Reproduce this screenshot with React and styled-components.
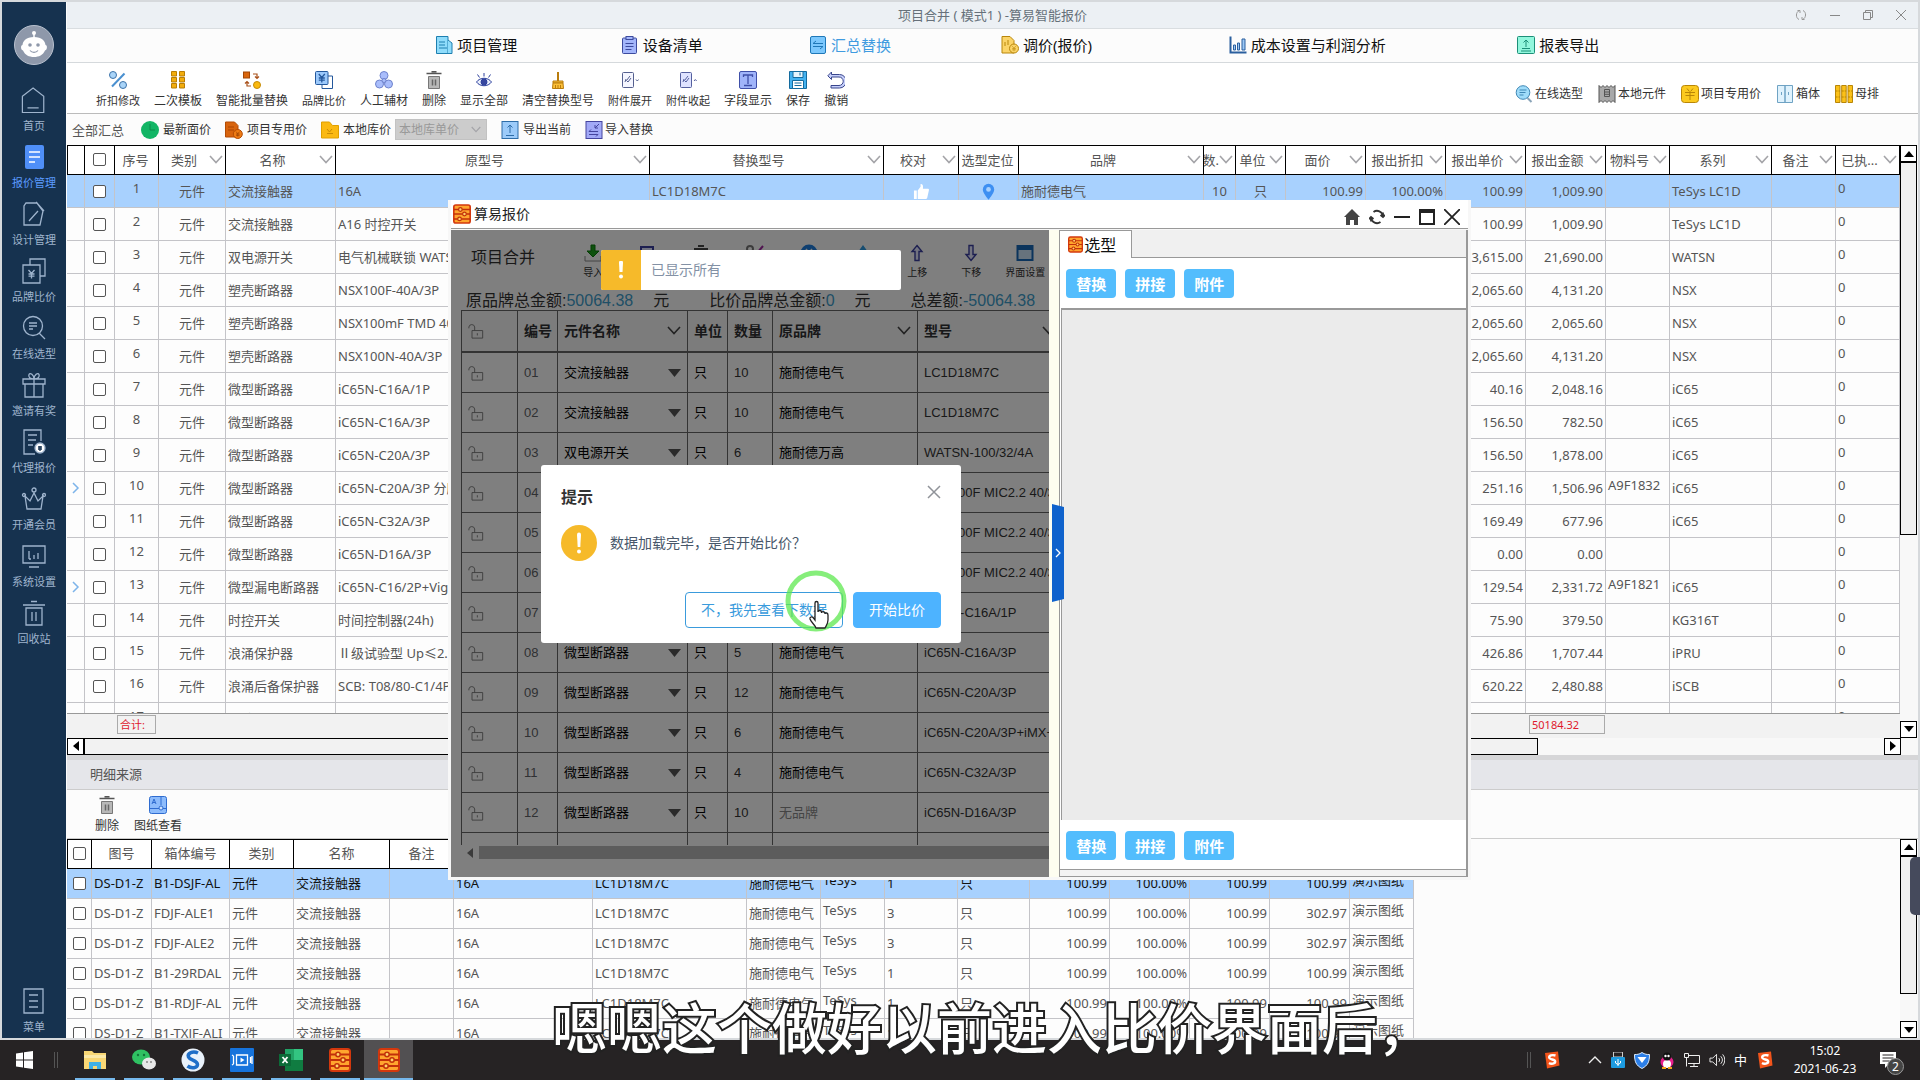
import styled, { createGlobalStyle, css } from "styled-components";

const GlobalStyle = createGlobalStyle`
    * {
        box-sizing: border-box;
    }

    body {
        margin: 0;
        overflow: hidden;
        font-family: "Noto Sans", "Noto Sans CJK SC", sans-serif;
        font-size: 13px;
        line-height: 18px;
        color: #555;
    }

    button, input, select {
        font-family: inherit;
        font-size: inherit;
        line-height: inherit;
        margin: 0;
    }

    button {
        border: none;
        background: none;
        padding: 0;
        cursor: pointer;
        color: inherit;
    }

    svg {
        display: block;
        flex: none;
    }
`;

// every drawing lives on an 18 x 18 board unless a box is given
const Icon = ({ name, size = 18, box = 18 }) => (
    <svg width={size} height={size} viewBox={`0 0 ${box} ${box}`} fill="none" aria-hidden="true">
        {icons[name]}
    </svg>
);

const yen = "M-3 -4 L0 -0.5 L3 -4 M0 -0.5 V4.5 M-3 0 H3 M-3 2.2 H3";

const icons = {
    // navigation tabs
    project: <g stroke="#1d7fb0"><path d="M1.500.5H13v17H1.500z" fill="#8fdcfb"/><path d="M13 4l4 3v10.500H13" fill="#8fdcfb"/><path d="M4 6h6M4 9h6M4 12h8"/></g>,
    list: <g stroke="#3c4a9e"><rect x="1.500" y="2" width="14" height="15.500" rx="1" fill="#a3b6fb"/><rect x="5" y=".5" width="7" height="3" fill="#a3b6fb"/><path d="M4.500 7.500h8M4.500 10.500h8M4.500 13.500h6"/></g>,
    swap: <g stroke="#1f78b8"><rect x="1.500" y=".5" width="15" height="17" rx="1.500" fill="#7cc8fd"/><path d="M4 7.500h10M4 7.500l3-2.500M14 10.500H4M14 10.500l-3 2.500"/></g>,
    price: <g stroke="#b8860b"><path d="M1 .5h8l4 4v12.500H1z" fill="#fbd468"/><path d="M4 6v4M7 4v5"/><circle cx="13" cy="12.500" r="4.500" fill="#fbd468"/><path d={yen} transform="translate(13 12.500) scale(.6)"/></g>,
    chart: <g stroke="#2a5f9e"><path d="M1.500.5v16h16" strokeWidth="2"/><path d="M4.500 9h2v5h-2zM8.500 7h2v7h-2zM13 3h3v11h-3z" fill="#9cc8f5"/></g>,
    report: <g stroke="#1c8f78"><rect x=".5" y=".5" width="17" height="17" rx="1" fill="#92f7dd"/><path d="M9 11V4M6.500 6.500L9 4l2.500 2.500M5 12.500h8M4 15h10"/></g>,

    // main toolbar
    percent: <g stroke="#3d72a8"><circle cx="4" cy="4" r="3.500" fill="#a9d4f8"/><circle cx="14" cy="14" r="3.500" fill="#a9d4f8"/><path d="M15.500 2.500L3 15.500" stroke="#4a90d0" strokeWidth="2"/></g>,
    blocks: <g fill="#f2ac0c" stroke="#b87d05">{[0.5, 6.5, 12.5].map((y) => <path key={y} d={`M2.500 ${y}h5v4.500h-5zM10.500 ${y}h5v4.500h-5z`}/>)}</g>,
    batch: <g><rect x=".5" y="1" width="6" height="6" fill="#d9660d" stroke="#a14605"/><circle cx="14" cy="14" r="3.500" fill="#fab90f" stroke="#c48a07"/><path d="M10 3h4v4M12 5.500l2 2 2-2M8 15H4v-4M2 12.500l2-2 2 2" stroke="#a8501a" strokeWidth="1.200"/></g>,
    compare: <g stroke="#24589c"><path d="M13 5h4.500v12.500H7V13.500"/><rect x=".5" y=".5" width="12.500" height="13" rx="1" fill="#9cc9fb"/><path d={yen} transform="translate(6.800 7)" strokeWidth="1.300"/></g>,
    balls: <g fill="#a9bdfb" stroke="#6f83cc"><circle cx="9" cy="4.500" r="4"/><circle cx="4.500" cy="13" r="4"/><circle cx="13.500" cy="13" r="4"/><circle cx="9" cy="9.500" r="2"/></g>,
    trash: <g><path d="M3.500 5.500h11v12h-11z" fill="#b8b8b8" stroke="#777"/><path d="M1.500 2.500h15M6.500.800h5" stroke="#555" strokeWidth="1.600"/><path d="M7.500 8.500v6M10.500 8.500v6" stroke="#666" strokeWidth="1.500"/></g>,
    eye: <g stroke="#2c3f9c"><path d="M1.500 11C5 6 13 6 16.500 11 13 16 5 16 1.500 11z" fill="#e8eefc"/><circle cx="9" cy="11" r="3" fill="#37479f"/><path d="M9 5.500V2M4.500 6.500l-2-3M13.500 6.500l2-3"/></g>,
    broom: <g stroke="#b97c0d"><path d="M9 1v9" strokeWidth="2"/><path d="M4 10h10v2H4z" fill="#fcc13a"/><path d="M4 12l-.5 5.500h11L14 12z" fill="#fcc13a"/><path d="M6.500 14v3M9 14v3M11.500 14v3"/></g>,
    clipDown: <g stroke="#55608f"><rect x="1.500" y="1.500" width="11" height="15" rx="1" fill="#f5f6ff"/><path d="M9 5l-3.500 4.500 1.500 1.500L10 7M5 8l-1 3"/><path d="M15 8.500l1.300 1.500 1.300-1.500"/></g>,
    clipUp: <g stroke="#55609f"><rect x="1.500" y="1.500" width="11" height="15" rx="1" fill="#dfe3ff"/><path d="M9 5l-3.500 4.500 1.500 1.500L10 7M5 8l-1 3"/><path d="M15 10l1.300-1.500L17.600 10"/></g>,
    field: <g stroke="#3f4fa8"><rect x=".5" y=".5" width="17" height="17" rx="1.500" fill="#a0b4fa"/><path d="M4.500 6V4h9v2M9 4v9M5 14.500h8" strokeWidth="1.300"/></g>,
    save: <g stroke="#146b9e"><path d="M.5.500h17v17H.500z" fill="#44b2f0"/><path d="M4 .5h10v6H4z" fill="#e6f5fd"/><path d="M11 1.500v3M3.500 9.500h11v8h-11z" fill="#fff"/><path d="M5.500 12h7M5.500 14.500h7"/></g>,
    undo: <g stroke="#39468c"><path d="M4.500 1L.800 4.800l3.700 3.700V6H12a3.500 3.500 0 010 8.500H4V17h8.500a5.800 5.800 0 000-13.500h-8z" fill="#c6cffa"/></g>,

    // right hand shortcuts
    search: <g><path d="M12.500 13l4 4" stroke="#8aa4b8" strokeWidth="2"/><circle cx="8" cy="7.500" r="6.800" fill="#9fdcfa" stroke="#3f87b5"/><path d="M4.500 5h7M4.500 7.500h6M4.500 10h4" stroke="#3f87b5"/></g>,
    chip: <g stroke="#555"><path d="M1 .5l2 2 2-2 2 2 2-2 2 2 2-2 2 2 2-2v17l-2-2-2 2-2-2-2 2-2-2-2 2-2-2-2 2z" fill="#a9a9a9"/><path d="M6.500 4.500h5v7h-5zM6.500 7h5M6.500 9.300h5"/></g>,
    coin: <g stroke="#b98607"><rect x=".5" y=".5" width="17" height="17" rx="3" fill="#fcca1f"/><path d="M6 3.500l2 2.500M12 3.500L10 6M4 7.500h10M4.500 10.500h9M9 6v9"/></g>,
    cabinet: <g stroke="#6fa3c4"><path d="M1.500.5h7.500v17H1.500zM9 .5h7.500v17H9z" fill="#dff2fd"/><path d="M5.500 7v3M12.500 7v3"/></g>,
    bars: <g fill="#fbc119" stroke="#b98607"><path d="M.5.500h4.500v17H.500zM6.700.5h4.500v17H6.700zM13 .5h4.500v17H13z"/><path d="M.5 6h4.500M6.700 6h4.500M13 6h4.500M.5 12h4.500M6.700 12h4.500M13 12h4.500" strokeDasharray="2 1"/></g>,

    // filter bar
    clock: <g><circle cx="9" cy="9" r="9" fill="#12b565"/><path d="M9 3v6h5" stroke="#0b8a4b"/></g>,
    docPrice: <g><path d="M.5 1h9l3.500 3.500V16H.500z" fill="#d8640e" stroke="#b34b04"/><path d="M3 6h6M3 9h6" stroke="#a84402"/><circle cx="12.800" cy="13" r="4.500" fill="#ef7c14" stroke="#b34b04"/><path d={yen} transform="translate(12.800 13) scale(.6)" stroke="#8c3702"/></g>,
    folder: <g><path d="M.5 1h8l3 3.500h6V17H.500z" fill="#fbb912" stroke="#e0a000"/><path d="M6 8l2.500 3L11 8M6 12.500h6" stroke="#c98c05"/></g>,
    exportUp: <g stroke="#2e6da8"><rect x="1" y=".5" width="16" height="17" fill="#9ccbfa"/><path d="M9 12V4M6.500 6.500L9 4l2.500 2.500M5 14.500h8"/></g>,
    importIn: <g stroke="#45459e"><rect x="1" y=".5" width="16" height="17" fill="#a2a9f7"/><path d="M14 3l-4 4M10 4v3h3M4 10.500h9M4 10.500l2-2M13 13.500H4M13 13.500l-2 2"/></g>,
    drawing: <g stroke="#2f6cd0"><rect x=".5" y=".5" width="17" height="17" rx="2" fill="#8dbcfc"/><path d="M3 8l2-5 2 5M4 6.500h2M12 1v8M1 12.500h9M14 12.500h3.500"/><circle cx="12" cy="12" r="2" fill="#cfe2fd"/></g>,

    // table marks
    thumb: <path d="M1 8h3v9H1zM5 17V8l3-4V1c2 0 3 1 2.500 5H16c1 0 1 1 .800 2L15 16c-.2.700-.7 1-1.500 1z" fill="#fff"/>,
    pin: <g><path d="M9 17.800C5 12.500 3 9.500 3 6.800a6 6 0 0112 0C15 9.500 13 12.500 9 17.800z" fill="#3d8ff2"/><circle cx="9" cy="6.800" r="2.500" fill="#a8d1fe"/></g>,
    lock: <g stroke="#777"><path d="M4.500 8.500h12v8.500h-12zM7.500 8.500V4.500a3.300 3.300 0 00-6.500 0V6M10.500 11.500v2.500"/></g>,

    // comparison toolbar
    load: <g><path d="M7 1h4v6h4l-6 6-6-6h4z" fill="#1da31d" stroke="#0a7a0a"/><path d="M1 12v5h16v-5" stroke="#888"/></g>,
    save2: <path d="M3 3h12v12H3z" fill="#dfe3ff" stroke="#3a3fa0" strokeWidth="2"/>,
    bin2: <g stroke="#444" strokeWidth="2"><path d="M6 2h6M2 5h14M4 6v10h10V6"/></g>,
    cut: <g strokeWidth="2"><circle cx="4" cy="5" r="3" stroke="#777"/><path d="M17 2L6 15" stroke="#a028a0"/></g>,
    yenBlue: <g><circle cx="9" cy="9" r="8.500" fill="#1e7fe0"/><path d={yen} transform="translate(9 9)" stroke="#fff" strokeWidth="1.500"/></g>,
    top2: <path d="M9 1l5 7h-3v8H7V8H4z" fill="#2e9ae0"/>,
    up: <path d="M9 1.500l5 6h-3v9H7v-9H4z" fill="#e4e6ff" stroke="#3a3fa0" strokeWidth="1.400"/>,
    down: <path d="M9 16.500l5-6h-3v-9H7v9H4z" fill="#e4e6ff" stroke="#3a3fa0" strokeWidth="1.400"/>,
    panel: <g stroke="#1668b8" strokeWidth="2"><rect x="1.500" y="2" width="15" height="14" fill="#cfe6fb"/><path d="M2 4.500h14" strokeWidth="3"/></g>,

    // side menu, 26 x 26
    home: <path d="M1.500 10L13 1l11.500 9v17.500h-23zM7 22.500h12"/>,
    quote: <g><rect x="4" y="1" width="19" height="24" rx="2" fill="#4f8ff8" stroke="none"/><path d="M8 8h11M8 13h11M8 18h6" stroke="#fff"/></g>,
    design: <path d="M3 24V5l2-3h11l6 8-3 14zM8 20l9-10M15 1l8 9"/>,
    brand: <g><path d="M9 7V1h15v17h-5M2 7h17v18H2z"/><path d={yen} transform="translate(10.500 16)"/></g>,
    online: <g><circle cx="12" cy="11" r="9.500"/><path d="M18 18l6 6M8 8h8M8 11h8M8 14h4"/></g>,
    gift: <path d="M2 7h22v5H2zM4 12v13h18V12M13 7v18M13 7C9 7 7 5 8 2.500S13 3 13 7zM13 7c4 0 6-2 5-4.500S13 3 13 7z"/>,
    agent: <g><path d="M20 12V1H3v24h11M7 6h9M7 11h8M7 16h5"/><circle cx="19" cy="19" r="5" fill="#fff"/><path d="M17 18h4M17 20h4M19 17v5" stroke="#16324f"/></g>,
    crown: <g><path d="M4 10l2 13h14l2-13-5 5-4-8-4 8z"/><circle cx="13" cy="4" r="2"/><circle cx="3" cy="9" r="1.500"/><circle cx="23" cy="9" r="1.500"/></g>,
    system: <path d="M2 3h22v17H2zM8 24h10M8 8v8M13 12v4M17 10v6M8 16h2"/>,
    recycle: <path d="M2 5h22M10 1.500h6M5 8h16v17H5zM11 12v9M15 12v9"/>,
    menu: <path d="M3 1h19v24H3zM8 7h9M8 13h9M8 19h9"/>,
};

// orange badge of the program
const AppLogo = ({ width = 18, height = 20 }) => (
    <svg width={width} height={height} viewBox="0 0 22 24" fill="none" aria-hidden="true">
        <rect x="1" y="1" width="20" height="22" rx="2.500" fill="#ffa52e" stroke="#d4380d" strokeWidth="2"/>
        <path d="M1 6.500h6M11 6.500h10M1 12h11M16 12h5M1 18h5M10 18h11" stroke="#c2300a" strokeWidth="1.800"/>
        <g fill="#ffd36b" stroke="#c2300a" strokeWidth="1.500">
            <circle cx="9" cy="6.500" r="2.200"/>
            <circle cx="14" cy="12" r="2.200"/>
            <circle cx="8" cy="18" r="2.200"/>
        </g>
    </svg>
);

const Chevron = ({ color = "#a4a4a8", width = 14 }) => (
    <svg width={width} height="9" viewBox="0 0 14 9" fill="none" aria-hidden="true">
        <path d="M1 1l6 6.500L13 1" stroke={color} strokeWidth="1.600"/>
    </svg>
);

const Arrow = ({ d, color = "#000" }) => (
    <svg width="10" height="10" viewBox="0 0 10 10" fill={color} aria-hidden="true"><path d={d}/></svg>
);

const arrows = {
    up: "M0 8L5 2l5 6z",
    down: "M0 2l5 6 5-6z",
    left: "M8 0L2 5l6 5z",
    right: "M2 0l6 5-6 5z",
};

const menuItems = [
    ["home", "首页"], ["quote", "报价管理"], ["design", "设计管理"], ["brand", "品牌比价"], ["online", "在线选型"],
    ["gift", "邀请有奖"], ["agent", "代理报价"], ["crown", "开通会员"], ["system", "系统设置"], ["recycle", "回收站"],
];

const tabs = [
    ["project", "项目管理"], ["list", "设备清单"], ["swap", "汇总替换"],
    ["price", "调价(报价)"], ["chart", "成本设置与利润分析"], ["report", "报表导出"],
];

const tools = [
    ["percent", "折扣修改", true], ["blocks", "二次模板"], ["batch", "智能批量替换"], ["compare", "品牌比价", true],
    ["balls", "人工辅材"], ["trash", "删除"], ["eye", "显示全部"], ["broom", "清空替换型号"],
    ["clipDown", "附件展开", true], ["clipUp", "附件收起", true], ["field", "字段显示"], ["save", "保存"], ["undo", "撤销"],
];

const shortcuts = [
    ["search", "在线选型"], ["chip", "本地元件"], ["coin", "项目专用价"], ["cabinet", "箱体"], ["bars", "母排"],
];

const summaryColumns = [
    { w: 18 }, { w: 30, check: true }, { w: 44, label: "序号" }, { w: 67, label: "类别", filter: true },
    { w: 110, label: "名称", filter: true }, { label: "原型号", filter: true }, { w: 234, label: "替换型号", filter: true },
    { w: 75, label: "校对", filter: true }, { w: 60, label: "选型定位" }, { w: 185, label: "品牌", filter: true },
    { w: 32, label: "数.", filter: true, cut: true }, { w: 50, label: "单位", filter: true }, { w: 80, label: "面价", filter: true },
    { w: 80, label: "报出折扣", filter: true }, { w: 80, label: "报出单价", filter: true }, { w: 80, label: "报出金额", filter: true },
    { w: 64, label: "物料号", filter: true }, { w: 102, label: "系列", filter: true }, { w: 64, label: "备注", filter: true },
    { w: 64, label: "已执...", filter: true },
];

// name, original model, unit price, amount, material no., series, has children
const summaryRows = [
    ["交流接触器", "16A", "100.99", "1,009.90", "", "TeSys LC1D"],
    ["交流接触器", "A16 时控开关", "100.99", "1,009.90", "", "TeSys LC1D"],
    ["双电源开关", "电气机械联锁 WATSN-100/32/4A", "3,615.00", "21,690.00", "", "WATSN"],
    ["塑壳断路器", "NSX100F-40A/3P", "2,065.60", "4,131.20", "", "NSX"],
    ["塑壳断路器", "NSX100mF TMD 40A/3P", "2,065.60", "2,065.60", "", "NSX"],
    ["塑壳断路器", "NSX100N-40A/3P", "2,065.60", "4,131.20", "", "NSX"],
    ["微型断路器", "iC65N-C16A/1P", "40.16", "2,048.16", "", "iC65"],
    ["微型断路器", "iC65N-C16A/3P", "156.50", "782.50", "", "iC65"],
    ["微型断路器", "iC65N-C20A/3P", "156.50", "1,878.00", "", "iC65"],
    ["微型断路器", "iC65N-C20A/3P 分励", "251.16", "1,506.96", "A9F1832", "iC65", true],
    ["微型断路器", "iC65N-C32A/3P", "169.49", "677.96", "", "iC65"],
    ["微型断路器", "iC65N-D16A/3P", "0.00", "0.00", "", ""],
    ["微型漏电断路器", "iC65N-C16/2P+Vigi", "129.54", "2,331.72", "A9F1821", "iC65", true],
    ["时控开关", "时间控制器(24h)", "75.90", "379.50", "", "KG316T"],
    ["浪涌保护器", "Ⅱ级试验型 Up≤2.5kV", "426.86", "1,707.44", "", "iPRU"],
    ["浪涌后备保护器", "SCB: T08/80-C1/4P", "620.22", "2,480.88", "", "iSCB"],
    ["消防电源监控模块", "", "", "", "", ""],
];

const detailWidths = [25, 60, 78, 64, 96, 64, 139, 154, 74, 64, 73, 72, 80, 80, 80, 80, 64];
const detailLabels = ["", "图号", "箱体编号", "类别", "名称", "备注", "原型号", "替换型号", "品牌", "系列", "数量", "单位", "面价", "折扣", "单价", "金额", "图纸"];
const detailRows = [
    ["B1-DSJF-AL", "1", "100.99"], ["FDJF-ALE1", "3", "302.97"], ["FDJF-ALE2", "3", "302.97"],
    ["B1-29RDAL", "1", "100.99"], ["B1-RDJF-AL", "1", "100.99"], ["B1-TXJF-ALI", "1", "100.99"],
];

const compareTools = [
    ["load", "导入"], ["save2", ""], ["bin2", ""], ["cut", ""], ["yenBlue", ""], ["top2", ""],
    ["up", "上移"], ["down", "下移"], ["panel", "界面设置"],
];

const compareRows = [
    ["交流接触器", "10", "施耐德电气", "LC1D18M7C"],
    ["交流接触器", "10", "施耐德电气", "LC1D18M7C"],
    ["双电源开关", "6", "施耐德万高", "WATSN-100/32/4A"],
    ["塑壳断路器", "2", "施耐德电气", "NSX100F MIC2.2 40/3P"],
    ["塑壳断路器", "1", "施耐德电气", "NSX100F MIC2.2 40/3P"],
    ["塑壳断路器", "2", "施耐德电气", "NSX100F MIC2.2 40/3P"],
    ["微型断路器", "51", "施耐德电气", "iC65N-C16A/1P"],
    ["微型断路器", "5", "施耐德电气", "iC65N-C16A/3P"],
    ["微型断路器", "12", "施耐德电气", "iC65N-C20A/3P"],
    ["微型断路器", "6", "施耐德电气", "iC65N-C20A/3P+iMX+OF"],
    ["微型断路器", "4", "施耐德电气", "iC65N-C32A/3P"],
    ["微型断路器", "10", "无品牌", "iC65N-D16A/3P"],
    ["", "", "", ""],
];

const Sidebar = () => (
    <Side>
        <Avatar>
            <svg width="40" height="40" viewBox="0 0 40 40" fill="none" aria-hidden="true">
                <circle cx="20" cy="20" r="19.500" fill="#8e98aa" stroke="#b9c2cf"/>
                <circle cx="20" cy="8" r="2" fill="#fff"/>
                <path d="M20 9v5" stroke="#fff" strokeWidth="1.500"/>
                <path d="M20 12c8 0 11 4 11.500 8 2 0 2 5-.5 5.500C29 30 25 32 20 32S11 30 9 25.500C6.500 25 6.500 20 8.500 20 9 16 12 12 20 12z" fill="#fff"/>
                <circle cx="16" cy="20" r="1.800" fill="#8e98aa"/>
                <circle cx="24" cy="20" r="1.800" fill="#8e98aa"/>
                <path d="M16 25.500c2 2.500 6 2.500 8 0" stroke="#8e98aa" strokeWidth="1.200"/>
            </svg>
        </Avatar>
        {menuItems.map(([icon, label]) => (
            <SideItem key={icon} $active={icon === "quote"}>
                <Icon name={icon} size={26} box={icon === "home" ? 28 : 26}/>
                {label}
            </SideItem>
        ))}
        <SideItem $last>
            <Icon name="menu" size={26} box={26}/>
            菜单
        </SideItem>
    </Side>
);

const VScroll = ({ thumb, rest }) => (
    <VBar>
        <ScrollButton aria-label="向上"><Arrow d={arrows.up}/></ScrollButton>
        <VThumb $grow={thumb}/>
        <VTrack $grow={rest}/>
        <ScrollButton aria-label="向下"><Arrow d={arrows.down}/></ScrollButton>
    </VBar>
);

const SummaryTable = () => (
    <Table>
        <colgroup>
            {summaryColumns.map((c, i) => <col key={i} width={c.w}/>)}
        </colgroup>
        <thead>
            <tr>
                {summaryColumns.map((c, i) => (
                    <Th key={i}>
                        {c.check && <Check type="checkbox" aria-label="全选"/>}
                        {c.label && (
                            <HeadCell>
                                <HeadLabel $cut={c.cut}>{c.label}</HeadLabel>
                                {c.filter && <Chevron/>}
                            </HeadCell>
                        )}
                    </Th>
                ))}
            </tr>
        </thead>
        <tbody>
            {summaryRows.map(([name, model, price, amount, material, series, open], i) => (
                <Row key={i} $active={i === 0} $height={33}>
                    <Td $align="center">{open && <Expand aria-label="展开"><svg width="8" height="12" viewBox="0 0 8 12" fill="none"><path d="M1 1l5 5-5 5" stroke="#7db4ea" strokeWidth="1.500"/></svg></Expand>}</Td>
                    <Td $align="center"><Check type="checkbox" aria-label={`选择 ${i + 1}`}/></Td>
                    <Td $align="center" $raised>{i + 1}</Td>
                    <Td $align="center">{i < 16 && "元件"}</Td>
                    <Td>{name}</Td>
                    <Td>{model}</Td>
                    <Td>{i === 0 && "LC1D18M7C"}</Td>
                    <Td><Mark>{i === 0 && <Icon name="thumb" size={17}/>}</Mark></Td>
                    <Td><Mark>{i === 0 && <Icon name="pin" size={17}/>}</Mark></Td>
                    <Td>{i === 0 && "施耐德电气"}</Td>
                    <Td $align="center">{i === 0 && "10"}</Td>
                    <Td $align="center">{i === 0 && "只"}</Td>
                    <Td $align="right">{i === 0 && "100.99"}</Td>
                    <Td $align="right">{i === 0 && "100.00%"}</Td>
                    <Td $align="right">{price}</Td>
                    <Td $align="right">{amount}</Td>
                    <Td $raised>{material}</Td>
                    <Td>{series}</Td>
                    <Td/>
                    <Td $raised>0</Td>
                </Row>
            ))}
        </tbody>
    </Table>
);

const DetailTable = () => (
    <DetailGrid>
        <colgroup>
            {detailWidths.map((w, i) => <col key={i} width={w}/>)}
        </colgroup>
        <thead>
            <tr>
                {detailLabels.map((label, i) => (
                    <Th key={i}>{i === 0 ? <Check type="checkbox" aria-label="全选明细"/> : label}</Th>
                ))}
            </tr>
        </thead>
        <tbody>
            {detailRows.map(([box, count, amount], i) => (
                <Row key={i} $active={i === 0} $height={30} $dark={i === 0}>
                    <Td $align="center"><Check type="checkbox" aria-label={`选择明细 ${i + 1}`}/></Td>
                    <Td>DS-D1-Z</Td>
                    <Td>{box}</Td>
                    <Td>元件</Td>
                    <Td>交流接触器</Td>
                    <Td/>
                    <Td>16A</Td>
                    <Td>LC1D18M7C</Td>
                    <Td>施耐德电气</Td>
                    <Td $raised>TeSys</Td>
                    <Td>{count}</Td>
                    <Td>只</Td>
                    <Td $align="right">100.99</Td>
                    <Td $align="right">100.00%</Td>
                    <Td $align="right">100.99</Td>
                    <Td $align="right">{amount}</Td>
                    <Td $raised>演示图纸</Td>
                </Row>
            ))}
        </tbody>
    </DetailGrid>
);

const ComparePane = () => (
    <Compare>
        <CompareHead>
            <CompareTitle>项目合并</CompareTitle>
            <CompareTools>
                {compareTools.map(([icon, label]) => (
                    <CompareTool key={icon}><Icon name={icon}/>{label}</CompareTool>
                ))}
            </CompareTools>
        </CompareHead>
        <Totals>
            <span>原品牌总金额:<Amount>50064.38</Amount></span>
            <TotalUnit>元</TotalUnit>
            <span>比价品牌总金额:<Amount>0</Amount></span>
            <TotalUnit>元</TotalUnit>
            <span>总差额:<Amount>-50064.38</Amount></span>
        </Totals>
        <CompareScroll>
            <CompareTable>
                <colgroup>
                    {[56, 40, 130, 40, 45, 145, 145].map((w, i) => <col key={i} width={w}/>)}
                </colgroup>
                <thead>
                    <tr>
                        <CompareTh><Icon name="lock" size={16}/></CompareTh>
                        <CompareTh>编号</CompareTh>
                        <CompareTh><Spread>元件名称<Chevron color="#444"/></Spread></CompareTh>
                        <CompareTh>单位</CompareTh>
                        <CompareTh>数量</CompareTh>
                        <CompareTh><Spread>原品牌<Chevron color="#444"/></Spread></CompareTh>
                        <CompareTh><Spread>型号<Chevron color="#444"/></Spread></CompareTh>
                    </tr>
                </thead>
                <tbody>
                    {compareRows.map(([name, count, brand, model], i) => (
                        <tr key={i}>
                            <CompareTd>{name && <Icon name="lock" size={16}/>}</CompareTd>
                            <CompareTd $tone="#606266">{name && String(i + 1).padStart(2, "0")}</CompareTd>
                            <CompareTd>{name && <Spread>{name}<svg width="13" height="8" viewBox="0 0 13 8" fill="#555"><path d="M0 0h13L6.500 8z"/></svg></Spread>}</CompareTd>
                            <CompareTd>{name && "只"}</CompareTd>
                            <CompareTd $tone="#333">{count}</CompareTd>
                            <CompareTd $tone={brand === "无品牌" ? "#888" : undefined}>{brand}</CompareTd>
                            <CompareTd $tone="#333">{model}</CompareTd>
                        </tr>
                    ))}
                </tbody>
            </CompareTable>
        </CompareScroll>
        <CompareBar><Arrow d={arrows.left} color="#777"/><CompareThumb/></CompareBar>
        <Shade/>
        <Toast role="status">
            <ToastMark>
                <svg width="6" height="18" viewBox="0 0 6 18" fill="#fff"><path d="M1 1.500a2 2 0 014 0L4.500 11h-3z"/><circle cx="3" cy="15.500" r="2"/></svg>
            </ToastMark>
            <ToastText>已显示所有</ToastText>
        </Toast>
        <Prompt role="dialog" aria-labelledby="prompt-title">
            <PromptHead>
                <PromptTitle id="prompt-title">提示</PromptTitle>
                <button aria-label="关闭">
                    <svg width="14" height="14" viewBox="0 0 14 14" fill="none"><path d="M1 1l12 12M13 1L1 13" stroke="#909399" strokeWidth="1.500"/></svg>
                </button>
            </PromptHead>
            <PromptBody>
                <svg width="36" height="36" viewBox="0 0 36 36" fill="#fff">
                    <circle cx="18" cy="18" r="18" fill="#f6ba2a"/>
                    <path d="M16 9.500a2 2 0 014 0L19.300 22h-2.600z"/>
                    <circle cx="18" cy="26.500" r="2"/>
                </svg>
                数据加载完毕，是否开始比价？
            </PromptBody>
            <PromptFoot>
                <PromptButton>不，我先查看下数据</PromptButton>
                <PromptButton $primary>开始比价</PromptButton>
            </PromptFoot>
        </Prompt>
    </Compare>
);

const ActionRow = () => (
    <Actions>
        <Action>替换</Action>
        <Action>拼接</Action>
        <Action>附件</Action>
    </Actions>
);

const CompareWindow = () => (
    <Window>
        <WindowTitle>
            <AppLogo/>
            <WindowName>算易报价</WindowName>
            <WindowButtons>
                <button aria-label="主页"><svg width="16" height="16" viewBox="0 0 16 16"><path d="M8 0l8 8h-2v8h-4v-5H6v5H2V8H0z" fill="#444"/></svg></button>
                <button aria-label="刷新"><svg width="16" height="16" viewBox="0 0 16 16" fill="none" stroke="#333" strokeWidth="1.800"><path d="M2 9a6 6 0 009.500 4M14 7A6 6 0 004.500 3M2 12.500V8.500M14 3.500v4M0 10l2-2 2.500 2M11.500 6L14 8l2-2"/></svg></button>
                <button aria-label="最小化"><svg width="16" height="16" viewBox="0 0 16 16"><path d="M0 7h16v2H0z" fill="#222"/></svg></button>
                <button aria-label="最大化"><svg width="16" height="16" viewBox="0 0 16 16"><path d="M0 0h16v16H0zM2 4v10h12V4z" fill="#222" fillRule="evenodd"/></svg></button>
                <button aria-label="关闭窗口"><svg width="16" height="16" viewBox="0 0 16 16"><path d="M0 0l16 16M16 0L0 16" stroke="#222" strokeWidth="1.800"/></svg></button>
            </WindowButtons>
        </WindowTitle>
        <WindowBody>
            <ComparePane/>
            <Gutter>
                <Handle aria-label="收起">
                    <svg width="12" height="98" viewBox="0 0 12 98" fill="none">
                        <path d="M0 0l12 3v92L0 98z" fill="#0f62cc"/>
                        <path d="M4 45l4 4-4 4" stroke="#fff" strokeWidth="1.300"/>
                    </svg>
                </Handle>
            </Gutter>
            <Picker>
                <PickerTabs>
                    <PickerTab><AppLogo width={15} height={17}/>选型</PickerTab>
                </PickerTabs>
                <ActionRow/>
                <PickerArea/>
                <ActionRow/>
                <PickerFoot/>
            </Picker>
        </WindowBody>
    </Window>
);

const SogouLogo = () => (
    <svg width="18" height="18" viewBox="0 0 18 18" fill="none" aria-hidden="true">
        <path d="M2 2l13-1.500 1.500 14L4 17.500z" fill="#f2541b"/>
        <path d="M12.500 4.500C9 3.500 6 4.500 6.200 6.500c.3 2.500 6 1.500 6 4 0 2.300-4 2.800-6.200 1.500" stroke="#fff" strokeWidth="2.400"/>
    </svg>
);

const Taskbar = () => (
    <Bar>
        <Start aria-label="开始">
            <svg width="17" height="18" viewBox="0 0 17 18" fill="#fff"><path d="M0 2.500l7-1v7H0zM8 1.300L17 0v8.500H8zM0 9.500h7v7l-7-1zM8 9.500h9V18l-9-1.300z"/></svg>
        </Start>
        <Divider/>
        <TaskButton aria-label="文件">
            <svg width="22" height="22" viewBox="0 0 22 22"><path d="M0 2h8l2 2h12v16H0z" fill="#f8d775"/><path d="M0 6h22v3H0z" fill="#fbe9a8"/><path d="M5 20v-7h12v7h-4v-3H9v3z" fill="#3fb0e6"/></svg>
        </TaskButton>
        <TaskButton aria-label="微信">
            <svg width="24" height="22" viewBox="0 0 24 22"><ellipse cx="9" cy="8" rx="9" ry="7.500" fill="#2fc162"/><circle cx="6" cy="6" r="1.200" fill="#12753a"/><circle cx="12" cy="6" r="1.200" fill="#12753a"/><ellipse cx="17" cy="14.500" rx="7" ry="6" fill="#e8e8e8"/><circle cx="15" cy="13" r="1" fill="#888"/><circle cx="19" cy="13" r="1" fill="#888"/></svg>
        </TaskButton>
        <TaskButton aria-label="浏览器">
            <svg width="24" height="24" viewBox="0 0 24 24" fill="none"><circle cx="12" cy="12" r="11.500" fill="#e9f2fb"/><path d="M17 5C12 2.500 6 5 7.500 9c1.500 3.500 9 3 9 7.500 0 3.500-6 4.500-10 1.500" stroke="#1f6fc8" strokeWidth="3.500"/></svg>
        </TaskButton>
        <TaskButton aria-label="录屏">
            <svg width="24" height="24" viewBox="0 0 24 24" fill="none"><rect width="24" height="24" rx="1" fill="#1673dc"/><path d="M6.500 7h11v10h-11zM3.500 8v8M2 7l1.500 1M2 17l1.500-1M20.500 9v6M22 8v8" stroke="#fff" strokeWidth="1.300"/><path d="M10.500 9.500l4 2.500-4 2.500z" fill="#fff"/></svg>
        </TaskButton>
        <TaskButton aria-label="表格">
            <svg width="24" height="22" viewBox="0 0 24 22" fill="none"><path d="M6 0h18v22H6z" fill="#21a366"/><path d="M15 0h9v11h-9z" fill="#33c481"/><path d="M6 11h18v11H6z" fill="#107c41"/><path d="M0 5h12v12H0z" fill="#0c6b38"/><path d="M3.500 8l5 6M8.500 8l-5 6" stroke="#fff" strokeWidth="1.800"/></svg>
        </TaskButton>
        <TaskButton aria-label="算易报价"><AppLogo width={22} height={24}/></TaskButton>
        <TaskButton aria-label="算易智能报价" $active><AppLogo width={22} height={24}/></TaskButton>
        <Tray>
            <Pinned>
                <Divider/>
                <SogouLogo/>
            </Pinned>
            <svg width="14" height="8" viewBox="0 0 14 8" fill="none"><path d="M1 7l6-6 6 6" stroke="#eee" strokeWidth="1.400"/></svg>
            <svg width="14" height="16" viewBox="0 0 14 16" fill="none"><path d="M2.500 0h9v5h-9z" stroke="#ccc"/><rect y="5" width="14" height="11" rx="1" fill="#1d9be0"/><path d="M7 14V7M4.500 9v2L7 12.500 9.500 11V9" stroke="#fff"/></svg>
            <svg width="16" height="17" viewBox="0 0 16 17" fill="none"><path d="M8 .5c3 2 5 2 7.500 2 0 7-1.500 11-7.500 14C2 13.500.5 9.500.5 2.500 3 2.500 5 2.500 8 .500z" fill="#2c7fe8" stroke="#dcebfb"/><path d="M3.500 5h9L8 11z" fill="#fff"/></svg>
            <svg width="16" height="17" viewBox="0 0 16 17"><ellipse cx="8" cy="10" rx="6.500" ry="6" fill="#e91e8c"/><ellipse cx="8" cy="12" rx="4" ry="4" fill="#fff"/><circle cx="8" cy="4.500" r="4" fill="#111"/><circle cx="6.500" cy="4" r="1.200" fill="#fff"/><circle cx="9.500" cy="4" r="1.200" fill="#fff"/><path d="M3 15h4v2H3zM9 15h4v2H9z" fill="#f5a31a"/></svg>
            <svg width="16" height="15" viewBox="0 0 16 15" fill="none" stroke="#eee"><path d="M5 2.500h10.500v8H4M10 10.500v3M6 13.500h8M.5.500h4v4h-4zM2.500 4.500v9"/></svg>
            <svg width="16" height="14" viewBox="0 0 17 14" fill="none" stroke="#eee"><path d="M1 5h3l4-4v12L4 9H1zM10.500 5a3 3 0 010 4M12.500 3a6 6 0 010 8M14.500 1a9 9 0 010 12"/></svg>
            <span>中</span>
            <SogouLogo/>
            <Clock><time>15:02</time><time>2021-06-23</time></Clock>
            <Notice aria-label="通知">
                <svg width="16" height="16" viewBox="0 0 16 16"><path d="M0 0h16v12H9l-4 4v-4H0z" fill="#fff"/><path d="M2.500 3h11M2.500 6h11M2.500 9h7" stroke="#262324"/></svg>
                <Count>2</Count>
            </Notice>
        </Tray>
    </Bar>
);

const App = () => (
    <Desktop>
        <GlobalStyle/>
        <Program>
            <Sidebar/>
            <Main>
                <TitleBar>
                    <span>项目合并 ( 模式1 ) -算易智能报价</span>
                    <TitleButtons>
                        <button aria-label="同步"><svg width="12" height="12" viewBox="0 0 12 12" fill="none" stroke="#999"><path d="M4.500 1.500C.500 3 .500 9 4 10.500M7.500 10.500C11.500 9 11.500 3 8 1.500M2.500 1.500h2.500V4M9.500 10.500H7V8"/></svg></button>
                        <button aria-label="最小化程序"><svg width="10" height="10" viewBox="0 0 10 10"><path d="M0 5.500h10" stroke="#888"/></svg></button>
                        <button aria-label="还原程序"><svg width="10" height="10" viewBox="0 0 10 10" fill="none" stroke="#888"><path d="M.5 2.500h7v7h-7zM2.500 2.500v-2h7v7h-2"/></svg></button>
                        <button aria-label="退出程序"><svg width="10" height="10" viewBox="0 0 10 10"><path d="M0 0l10 10M10 0L0 10" stroke="#888"/></svg></button>
                    </TitleButtons>
                </TitleBar>
                <Tabs>
                    {tabs.map(([icon, label]) => (
                        <Tab key={icon} href="#" $active={icon === "swap"}><Icon name={icon}/>{label}</Tab>
                    ))}
                </Tabs>
                <Toolbar>
                    <Group>
                        {tools.map(([icon, label, small]) => (
                            <Tool key={icon} $small={small}><Icon name={icon}/>{label}</Tool>
                        ))}
                    </Group>
                    <Shortcuts>
                        {shortcuts.map(([icon, label]) => (
                            <Inline key={icon} $tight><Icon name={icon}/>{label}</Inline>
                        ))}
                    </Shortcuts>
                </Toolbar>
                <FilterBar>
                    <Scope>全部汇总</Scope>
                    <Inline><Icon name="clock"/>最新面价</Inline>
                    <Inline><Icon name="docPrice"/>项目专用价</Inline>
                    <PriceSource>
                        <Inline><Icon name="folder"/>本地库价</Inline>
                        <SelectBox>
                            <Select disabled aria-label="本地库单价"><option>本地库单价</option></Select>
                            <Chevron width={10}/>
                        </SelectBox>
                    </PriceSource>
                    <Inline><Icon name="exportUp"/>导出当前</Inline>
                    <Inline $tight><Icon name="importIn"/>导入替换</Inline>
                </FilterBar>
                <SummaryPane>
                    <SummaryMain>
                        <Clip><SummaryTable/></Clip>
                        <SumRow>
                            <SumBox $width={39}>合计:</SumBox>
                            <SumBox $width={76}>50184.32</SumBox>
                        </SumRow>
                    </SummaryMain>
                    <VScroll thumb={372} rest={186}/>
                </SummaryPane>
                <HBar>
                    <ScrollButton aria-label="向左"><Arrow d={arrows.left}/></ScrollButton>
                    <HThumb/>
                    <HTrack/>
                    <ScrollButton aria-label="向右"><Arrow d={arrows.right}/></ScrollButton>
                </HBar>
                <SectionTitle>明细来源</SectionTitle>
                <DetailTools>
                    <Tool><Icon name="trash"/>删除</Tool>
                    <Tool><Icon name="drawing"/>图纸查看</Tool>
                </DetailTools>
                <DetailPane>
                    <Clip><DetailTable/></Clip>
                    <VScroll thumb={137} rest={27}/>
                    <SideGrip/>
                </DetailPane>
            </Main>
        </Program>
        <CompareWindow/>
        <Taskbar/>
        <Caption>嗯嗯这个做好以前进入比价界面后，</Caption>
        <Pointer>
            <svg width="64" height="66" viewBox="0 0 64 66" fill="none" aria-hidden="true">
                <circle cx="32" cy="32" r="28" stroke="#5ee84f" strokeOpacity=".75" strokeWidth="5"/>
                <path d="M31 34c0-2 3-2 3 0v9c0-2 3.500-2 3.500 0v1c0-2 3.500-1.500 3.500.5v.5c0-1.500 3-1.500 3 1v5c0 4-2 6-3 8h-9c-1-3-5-6-6-9-.6-2 2-3 3.500-1l1.500 2z" fill="#fff" stroke="#222" strokeWidth="1.300"/>
            </svg>
        </Pointer>
    </Desktop>
);

export default App;

const Desktop = styled.div`
    position: relative;
    height: 100vh;
    display: grid;
    grid-template-rows: minmax(0, 1fr) 40px;
    overflow: hidden;
`;

const Program = styled.div`
    display: flex;
    min-height: 0;
    border: 2px solid #d6d9dc;
`;

const Side = styled.nav`
    flex: none;
    width: 64px;
    display: flex;
    flex-direction: column;
    align-items: center;
    background: #16324f;
`;

const Avatar = styled.div`
    margin: 23px 0 18px;
`;

const SideItem = styled.button`
    height: ${({ $last }) => ($last ? "50px" : "57px")};
    margin-top: ${({ $last }) => ($last ? "auto" : 0)};
    width: 100%;
    flex: none;
    display: flex;
    flex-direction: column;
    align-items: center;
    gap: 4px;
    padding-top: ${({ $last }) => ($last ? 0 : "4px")};
    font-size: 11px;
    color: ${({ $active }) => ($active ? "#5b9bff" : "#9fb4cd")};

    svg {
        stroke: #9fb4cd;
        stroke-width: 1.3;
    }
`;

const Main = styled.main`
    flex: 1;
    min-width: 0;
    display: flex;
    flex-direction: column;
    padding-left: 1px;
    background: #fcfcfc;
`;

const TitleBar = styled.header`
    position: relative;
    flex: none;
    height: 27px;
    display: flex;
    align-items: center;
    justify-content: center;
    background: #ecf0f4;
    border-bottom: 1px solid #d9dde0;
    color: #66707a;
`;

const TitleButtons = styled.div`
    position: absolute;
    right: 12px;
    display: flex;
    gap: 23px;
`;

const Tabs = styled.nav`
    flex: none;
    height: 34px;
    display: grid;
    grid-template-columns: 316fr 186fr 185fr 191fr 202fr 319fr 183fr 268fr;
    padding-bottom: 2px;
    border-bottom: 1px solid #d5d9dc;
`;

const Tab = styled.a`
    display: flex;
    align-items: center;
    justify-content: center;
    gap: 4px;
    font-size: 15px;
    text-decoration: none;
    white-space: nowrap;
    color: ${({ $active }) => ($active ? "#3f9be0" : "#111")};

    &:first-child {
        grid-column: 2;
    }
`;

const Toolbar = styled.div`
    flex: none;
    height: 51px;
    display: flex;
    align-items: center;
    justify-content: space-between;
    padding: 4px 39px 0 29px;
    background: #fff;
    border-bottom: 1px solid #bbb;
`;

const Group = styled.div`
    display: flex;
    align-items: center;
    gap: 14px;
`;

const Shortcuts = styled(Group)`
    gap: 15px;
    padding-top: 8px;
`;

const Tool = styled.button`
    display: flex;
    flex-direction: column;
    align-items: center;
    gap: 3px;
    font-size: ${({ $small }) => ($small ? "11px" : "12px")};
    white-space: nowrap;
    color: #333;
`;

const Inline = styled.button`
    display: flex;
    align-items: center;
    gap: ${({ $tight }) => ($tight ? "2px" : "4px")};
    font-size: 12px;
    white-space: nowrap;
    color: #333;
`;

const FilterBar = styled.div`
    flex: none;
    height: 31px;
    display: flex;
    align-items: center;
    gap: 14px;
    padding-left: 5px;
`;

const Scope = styled.span`
    margin-right: 3px;
`;

const PriceSource = styled.div`
    display: flex;
    align-items: center;
    gap: 4px;
`;

const SelectBox = styled.div`
    width: 92px;
    height: 21px;
    display: flex;
    align-items: center;
    padding-right: 5px;
    background: #ccc;
    border: 1px solid #c2c2c2;
`;

const Select = styled.select`
    flex: 1;
    min-width: 0;
    appearance: none;
    border: none;
    background: none;
    padding: 0 0 0 3px;
    font-size: 12px;
    color: #999;
    opacity: 1;
`;

const SummaryPane = styled.div`
    flex: 592 1 0;
    min-height: 0;
    display: flex;
`;

const SummaryMain = styled.div`
    flex: 1;
    min-width: 0;
    display: flex;
    flex-direction: column;
`;

const Clip = styled.div`
    flex: 1;
    min-height: 0;
    min-width: 0;
    overflow: hidden;
    border-top: 1px solid #000;
`;

const Table = styled.table`
    width: 100%;
    table-layout: fixed;
    border-collapse: separate;
    border-spacing: 0;
`;

const Th = styled.th`
    height: 29px;
    padding: 0 0 1px;
    font-weight: 400;
    text-align: center;
    background: #fff;
    border-right: 1px solid #000;
    border-bottom: 1px solid #000;

    &:first-child {
        border-left: 1px solid #000;
    }
`;

const DetailGrid = styled(Table)`
    width: 1347px;

    ${Th} {
        height: 30px;
    }
`;

const HeadCell = styled.div`
    display: flex;
    align-items: center;
    padding-right: 2px;
`;

const HeadLabel = styled.span`
    flex: 1;
    min-width: 0;
    display: flex;
    overflow: hidden;
    white-space: nowrap;
    justify-content: ${({ $cut }) => ($cut ? "flex-end" : "center")};
`;

const Row = styled.tr`
    height: ${({ $height }) => $height}px;
    background: ${({ $active }) => ($active ? "#a8d1fe" : "#fdfdfd")};
    color: ${({ $dark }) => ($dark ? "#111" : "#555")};
`;

const Td = styled.td`
    padding: 0 2px;
    text-align: ${({ $align }) => $align || "left"};
    white-space: nowrap;
    overflow: hidden;
    border-right: 1px solid #c4c4c8;
    border-bottom: 1px solid #c4c4c8;
    ${({ $raised }) => $raised && css`
        padding-bottom: 7px;
    `}
`;

const Mark = styled.div`
    display: flex;
    justify-content: center;
`;

const Expand = styled.button`
    display: flex;
    margin: auto;
`;

const Check = styled.input`
    appearance: none;
    display: block;
    width: 13px;
    height: 13px;
    margin: auto;
    border: 1px solid #555;
    border-radius: 2px;
    background: #fff;
`;

const SumRow = styled.div`
    flex: none;
    height: 25px;
    display: flex;
    justify-content: space-between;
    align-items: center;
    padding: 0 295px 2px 50px;
    background: #f2f2f2;
    border-top: 1px solid #999;
`;

const SumBox = styled.output`
    width: ${({ $width }) => $width}px;
    height: 19px;
    padding-left: 2px;
    font-size: 11px;
    line-height: 17px;
    color: #e0182d;
    border: 1px solid #aaa;
`;

const VBar = styled.div`
    flex: none;
    width: 18px;
    display: flex;
    flex-direction: column;
    background: #f8f8f8;
`;

const ScrollButton = styled.button`
    flex: none;
    width: 17px;
    height: 17px;
    display: flex;
    align-items: center;
    justify-content: center;
    background: #fff;
    border: 1px solid #000;
`;

const VThumb = styled.div`
    flex: ${({ $grow }) => $grow} 1 0;
    width: 17px;
    background: #f0f0f0;
    border: 1px solid #000;
`;

const VTrack = styled.div`
    flex: ${({ $grow }) => $grow} 1 0;
`;

const HBar = styled.div`
    flex: none;
    height: 17px;
    display: flex;
    padding-right: 17px;
    background: #f8f8f8;
`;

const HThumb = styled.div`
    flex: 1452 1 0;
    background: #f2f2f2;
    border: 1px solid #000;
`;

const HTrack = styled.div`
    flex: 346 1 0;
`;

const SectionTitle = styled.h2`
    flex: none;
    height: 35px;
    margin: 0;
    padding: 5px 0 0 23px;
    font-size: 13px;
    font-weight: 400;
    background: #e5e6ea;
    border-top: 5px solid #d6d6d8;
    border-bottom: 1px solid #ccc;
`;

const DetailTools = styled.div`
    flex: none;
    height: 49px;
    display: flex;
    align-items: center;
    gap: 15px;
    padding: 4px 0 0 28px;
    border-bottom: 1px solid #ccc;
`;

const DetailPane = styled.div`
    position: relative;
    flex: 199 1 0;
    min-height: 0;
    display: flex;

    ${Clip} {
        border-top: none;
    }

    ${Th} {
        border-top: 1px solid #000;
    }
`;

const SideGrip = styled.div`
    position: absolute;
    top: 18px;
    right: -2px;
    width: 10px;
    height: 58px;
    background: #454a5c;
    border-radius: 5px 0 0 5px;
`;

const Window = styled.section`
    position: absolute;
    left: 448px;
    top: 200px;
    width: 1023px;
    height: 680px;
    display: flex;
    flex-direction: column;
    padding: 0 3px 3px;
    background: #f7f7f7;
`;

const WindowTitle = styled.header`
    flex: none;
    height: 29px;
    display: flex;
    align-items: center;
    padding: 0 8px 0 2px;
    background: #fff;
    border-bottom: 1px solid #999;
`;

const WindowName = styled.span`
    flex: 1;
    padding-left: 3px;
    font-size: 14px;
    color: #222;
`;

const WindowButtons = styled.div`
    display: flex;
    gap: 9px;
    padding-top: 5px;
`;

const WindowBody = styled.div`
    flex: 1;
    min-height: 0;
    display: flex;
    padding-top: 1px;
`;

const Compare = styled.div`
    position: relative;
    flex: 600 1 0;
    min-width: 0;
    display: flex;
    flex-direction: column;
    background: #fff;
    overflow: hidden;
`;

const CompareHead = styled.div`
    flex: none;
    height: 58px;
    display: flex;
    justify-content: space-between;
    padding-left: 20px;
`;

const CompareTitle = styled.h1`
    margin: 0;
    padding-top: 18px;
    font-size: 16px;
    font-weight: 400;
    color: #333;
`;

const CompareTools = styled.div`
    display: grid;
    grid-template-columns: repeat(9, 54px);
    padding-top: 14px;
    margin-right: -3px;
`;

const CompareTool = styled.button`
    display: flex;
    flex-direction: column;
    align-items: center;
    gap: 1px;
    font-size: 10px;
    color: #333;
`;

const Totals = styled.div`
    flex: none;
    height: 22px;
    display: flex;
    align-items: center;
    gap: 20px;
    padding: 4px 0 0 15px;
    font-size: 16px;
    white-space: nowrap;
    font-family: "Liberation Sans", "Noto Sans CJK SC", sans-serif;
    color: #333;
`;

const Amount = styled.span`
    color: #3f9ecc;
`;

const TotalUnit = styled.span`
    margin-right: 20px;
`;

const CompareScroll = styled.div`
    flex: 1;
    min-height: 0;
    overflow: hidden;
    margin-left: 10px;
`;

const CompareTable = styled.table`
    width: 602px;
    table-layout: fixed;
    border-collapse: separate;
    border-spacing: 0;
    border-left: 1px solid #666;
    font-family: "Liberation Sans", "Noto Sans CJK SC", sans-serif;
`;

const CompareTh = styled.th`
    height: 43px;
    padding: 0 6px 1px;
    text-align: left;
    white-space: nowrap;
    font-size: 14px;
    background: #f8f8f8;
    color: #303133;
    border-top: 1px solid #666;
    border-right: 1px solid #666;
    border-bottom: 2px solid #666;
`;

const CompareTd = styled.td`
    height: 40px;
    padding: 0 6px;
    white-space: nowrap;
    overflow: hidden;
    color: ${({ $tone }) => $tone || "#000"};
    border-right: 1px solid #666;
    border-bottom: 1px solid #666;
`;

const Spread = styled.span`
    display: flex;
    align-items: center;
    justify-content: space-between;
`;

const CompareBar = styled.div`
    flex: none;
    height: 13px;
    display: flex;
    align-items: center;
    gap: 4px;
    margin: 1px 0 18px 14px;
`;

const CompareThumb = styled.div`
    flex: 1;
    height: 100%;
    background: #b8b8b8;
`;

const Shade = styled.div`
    position: absolute;
    inset: 0;
    background: rgba(0, 0, 0, 0.5);
`;

const Toast = styled.div`
    position: absolute;
    left: 150px;
    top: 20px;
    width: 300px;
    height: 40px;
    display: flex;
    background: #fff;
    border-radius: 2px;
    overflow: hidden;
`;

const ToastMark = styled.span`
    width: 40px;
    display: flex;
    align-items: center;
    justify-content: center;
    background: #f6ba2a;
`;

const ToastText = styled.span`
    padding: 11px 10px;
    font-size: 14px;
    color: #8391a5;
`;

const Prompt = styled.div`
    position: absolute;
    left: 90px;
    top: 235px;
    width: 420px;
    padding: 20px;
    background: #fff;
    border-radius: 3px;
`;

const PromptHead = styled.div`
    display: flex;
    align-items: flex-start;
    justify-content: space-between;
`;

const PromptTitle = styled.h2`
    margin: 0;
    font-size: 16px;
    line-height: 24px;
    color: #333;
`;

const PromptBody = styled.div`
    display: flex;
    align-items: center;
    gap: 13px;
    padding: 16px 0 31px;
    font-size: 14px;
    color: #48576a;
`;

const PromptFoot = styled.div`
    display: flex;
    justify-content: flex-end;
    gap: 10px;
    margin-bottom: -5px;
`;

const PromptButton = styled.button`
    height: 36px;
    padding: 0 15px;
    font-size: 14px;
    border: 1px solid ${({ $primary }) => ($primary ? "#4db3ff" : "#3a9bdc")};
    border-radius: 4px;
    background: ${({ $primary }) => ($primary ? "#4db3ff" : "#fff")};
    color: ${({ $primary }) => ($primary ? "#fff" : "#3a9bdc")};
`;

const Gutter = styled.div`
    position: relative;
    flex: none;
    width: 10px;
    background: #fdfdf0;
`;

const Handle = styled.button`
    position: absolute;
    left: 3px;
    top: 274px;
    z-index: 1;
`;

const Picker = styled.div`
    flex: 407 1 0;
    display: flex;
    flex-direction: column;
    background: #fff;
    border-right: 2px solid #999;
    border-left: 1px solid #999;
`;

const PickerTabs = styled.div`
    flex: none;
    height: 28px;
    background: #f0f0f0;
    border-bottom: 1px solid #999;
`;

const PickerTab = styled.button`
    height: 28px;
    width: 72px;
    display: flex;
    align-items: center;
    gap: 1px;
    padding-left: 8px;
    font-size: 16px;
    background: #fff;
    border: solid #999;
    border-width: 1px 1px 0 0;
    color: #111;
`;

const Actions = styled.div`
    flex: none;
    display: flex;
    gap: 9px;
    padding: 11px 6px 9px;
`;

const Action = styled.button`
    width: 50px;
    height: 29px;
    border-radius: 4px;
    background: #53bdfd;
    color: #fff;
    font-size: 15px;
    font-weight: 700;
`;

const PickerArea = styled.div`
    flex: 1;
    margin: 1px 0 0 1px;
    background: #ebebeb;
    border: solid #999;
    border-width: 2px 0 0 1px;
`;

const PickerFoot = styled.div`
    flex: none;
    height: 8px;
    background: #f3f3f3;
    border: solid #999;
    border-width: 1px 0;
`;

const Bar = styled.footer`
    display: flex;
    align-items: stretch;
    padding-right: 24px;
    background: #262324;
    color: #fff;
`;

const Start = styled.button`
    width: 48px;
    display: flex;
    align-items: center;
    justify-content: center;
`;

const Divider = styled.span`
    align-self: center;
    width: 4px;
    height: 16px;
    margin: 0 12px 0 6px;
    border: solid #555;
    border-width: 0 1px;
`;

const TaskButton = styled.button`
    width: 49px;
    display: flex;
    align-items: center;
    justify-content: center;
    background-color: ${({ $active }) => ($active ? "#525052" : "transparent")};
    background-image: linear-gradient(#76b9ed, #76b9ed);
    background-size: ${({ $active }) => ($active ? "100%" : "40px")} 2px;
    background-position: center bottom;
    background-repeat: no-repeat;
`;

const Tray = styled.div`
    margin-left: auto;
    display: flex;
    align-items: center;
    gap: 9px;
`;

const Pinned = styled.div`
    display: flex;
    align-items: center;
    gap: 12px;
    margin-right: 18px;

    ${Divider} {
        margin: 0;
    }
`;

const Clock = styled.div`
    width: 84px;
    display: flex;
    flex-direction: column;
    align-items: center;
    font-size: 12px;
`;

const Notice = styled.button`
    position: relative;
    margin-left: 4px;
`;

const Count = styled.span`
    position: absolute;
    left: 7px;
    top: 6px;
    width: 17px;
    height: 17px;
    border: 1px solid #999;
    border-radius: 50%;
    background: #444;
    font-size: 12px;
    line-height: 15px;
    color: #fff;
`;

const Caption = styled.p`
    position: absolute;
    left: 0;
    right: 0;
    bottom: 15px;
    margin: 0;
    padding-left: 64px;
    text-align: center;
    font-family: "Noto Sans CJK SC", sans-serif;
    font-size: 55px;
    font-weight: 500;
    line-height: 80px;
    color: #fff;
    -webkit-text-stroke: 4px #222;
    paint-order: stroke fill;
    pointer-events: none;
`;

const Pointer = styled.div`
    position: absolute;
    left: 784px;
    top: 569px;
    pointer-events: none;
`;
